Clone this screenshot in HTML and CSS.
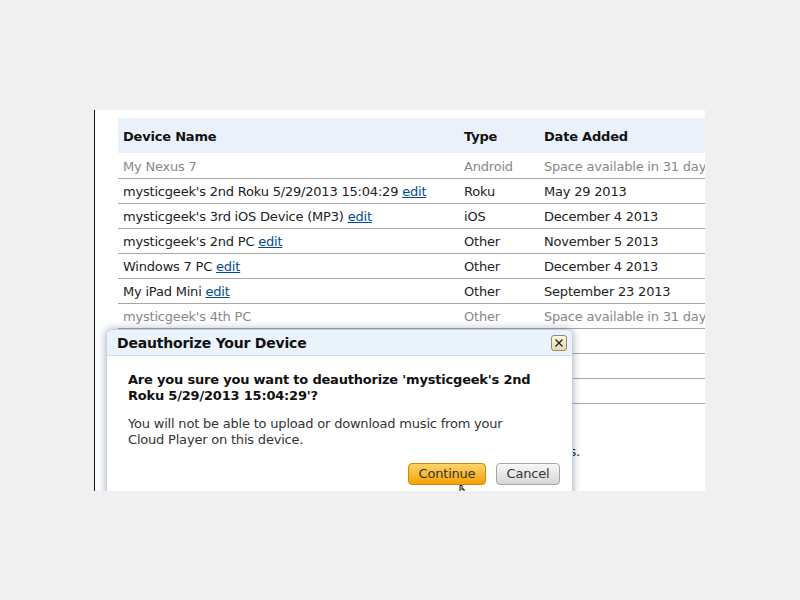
FILE: index.html
```html
<!DOCTYPE html>
<html>
<head>
<meta charset="utf-8">
<link rel="stylesheet" href="styles.css">
</head>
<body>
<div class="page">
  <div class="content">
    <table class="devices">
      <thead>
        <tr><th class="c-name">Device Name</th><th class="c-type">Type</th><th class="c-date">Date Added</th></tr>
      </thead>
      <tbody>
        <tr class="inactive"><td>My Nexus 7</td><td>Android</td><td>Space available in 31 days</td></tr>
        <tr><td>mysticgeek's 2nd Roku 5/29/2013 15:04:29 <a href="#">edit</a></td><td>Roku</td><td>May 29 2013</td></tr>
        <tr><td>mysticgeek's 3rd iOS Device (MP3) <a href="#">edit</a></td><td>iOS</td><td>December 4 2013</td></tr>
        <tr><td>mysticgeek's 2nd PC <a href="#">edit</a></td><td>Other</td><td>November 5 2013</td></tr>
        <tr><td>Windows 7 PC <a href="#">edit</a></td><td>Other</td><td>December 4 2013</td></tr>
        <tr><td>My iPad Mini <a href="#">edit</a></td><td>Other</td><td>September 23 2013</td></tr>
        <tr class="inactive"><td>mysticgeek's 4th PC</td><td>Other</td><td>Space available in 31 days</td></tr>
        <tr><td>mysticgeek's PC <a href="#">edit</a></td><td>Other</td><td></td></tr>
        <tr><td>mysticgeek's iPhone <a href="#">edit</a></td><td>iOS</td><td></td></tr>
        <tr><td>mysticgeek's Kindle <a href="#">edit</a></td><td>Other</td><td></td></tr>
      </tbody>
    </table>
    <p class="note">You can authorize up to 10 devices.</p>

    <div class="dialog">
      <div class="dlg-head">
        <span class="dlg-title">Deauthorize Your Device</span>
        <span class="dlg-close"><svg width="14" height="14" viewBox="0 0 14 14"><path d="M3.5 3.5 L10.5 10.5 M10.5 3.5 L3.5 10.5" stroke="#222" stroke-width="1.3" fill="none"/></svg></span>
      </div>
      <div class="dlg-body">
        <p class="dlg-q">Are you sure you want to deauthorize 'mysticgeek's 2nd Roku 5/29/2013 15:04:29'?</p>
        <p class="dlg-msg">You will not be able to upload or download music from your Cloud Player on this device.</p>
        <div class="dlg-actions">
          <button class="btn btn-primary">Continue</button>
          <button class="btn btn-secondary">Cancel</button>
        </div>
      </div>
    </div>
    <svg class="cursor" width="12" height="8" viewBox="0 0 12 8"><path d="M3 0.5 L3 8 M3 0.5 Q4 0 5 0.5 L5 5 M5 4 L7 4 L7 8" fill="#fff" stroke="#000" stroke-width="1"/></svg>
  </div>
</div>
</body>
</html>
```
FILE: styles.css
```css
html, body {
  margin: 0;
  padding: 0;
  background: #f0f0f0;
}
body {
  font-family: "DejaVu Sans", Verdana, sans-serif;
  font-size: 13px;
  letter-spacing: -0.2px;
  color: #222;
}
.page {
  padding-top: 110px;
  padding-left: 94px;
}
.content {
  position: relative;
  width: 611px;
  height: 381px;
  background: #fff;
  border-left: 1px solid #111;
  overflow: hidden;
  padding: 8px 0 0 23px;
  box-sizing: border-box;
}
.devices {
  border-collapse: collapse;
  width: 640px;
  table-layout: fixed;
}
.devices th {
  background: #eaf1fb;
  height: 35px;
  text-align: left;
  font-weight: bold;
  padding: 2px 0 0 5px;
  box-sizing: border-box;
  color: #111;
  white-space: nowrap;
}
.c-name { width: 341px; }
.c-type { width: 80px; }
.devices td {
  height: 25px;
  padding: 1px 0 0 5px;
  box-sizing: border-box;
  border-bottom: 1px solid #a8a8a8;
  white-space: nowrap;
  overflow: hidden;
  color: #222;
}
.devices tbody tr:first-child td {
  padding-top: 3px;
}
.devices tr.inactive td {
  color: #888;
}
.devices a {
  color: #004b91;
  text-decoration: underline;
}
.note {
  margin: 40px 0 0 0;
  width: 462px;
  text-align: right;
  color: #222;
}
.dialog {
  position: absolute;
  left: 11px;
  top: 219px;
  width: 467px;
  height: 200px;
  background: #fff;
  border: 1px solid #c4d2e0;
  border-radius: 6px;
  box-shadow: 0 0 8px rgba(60, 80, 110, 0.45);
  box-sizing: border-box;
}
.dlg-head {
  display: flex;
  align-items: center;
  justify-content: space-between;
  height: 25px;
  background: #eaf2fc;
  border-bottom: 1px solid #d3dfec;
  border-radius: 6px 6px 0 0;
  padding: 0 5px 0 10px;
}
.dlg-title {
  font-weight: bold;
  font-size: 14px;
  color: #111;
}
.dlg-close {
  display: flex;
  width: 14px;
  height: 14px;
  border: 1px solid #8c8a70;
  border-radius: 3px;
  background: linear-gradient(#fbf8dc, #e2dcae);
}
.dlg-body {
  padding: 16px 20px 0 21px;
}
.dlg-q {
  margin: 0;
  font-weight: bold;
  line-height: 16px;
  color: #111;
}
.dlg-msg {
  margin: 12px 40px 0 0;
  line-height: 16px;
  color: #333;
}
.dlg-actions {
  display: flex;
  justify-content: flex-end;
  gap: 10px;
  margin-top: 15px;
  margin-right: -8px;
}
.btn {
  height: 22px;
  font-family: "DejaVu Sans", Verdana, sans-serif;
  font-size: 13px;
  letter-spacing: -0.2px;
  border-radius: 4px;
  padding: 0 6px;
  line-height: 20px;
}
.btn-primary {
  width: 78px;
  background: linear-gradient(#ffd36a, #f5a300);
  border: 1px solid #c58a10;
  color: #333;
}
.btn-secondary {
  width: 64px;
  background: linear-gradient(#f8f8f8, #d6d6d6);
  border: 1px solid #a6a6a6;
  color: #333;
}
.cursor {
  position: absolute;
  left: 362px;
  top: 375px;
}
```
